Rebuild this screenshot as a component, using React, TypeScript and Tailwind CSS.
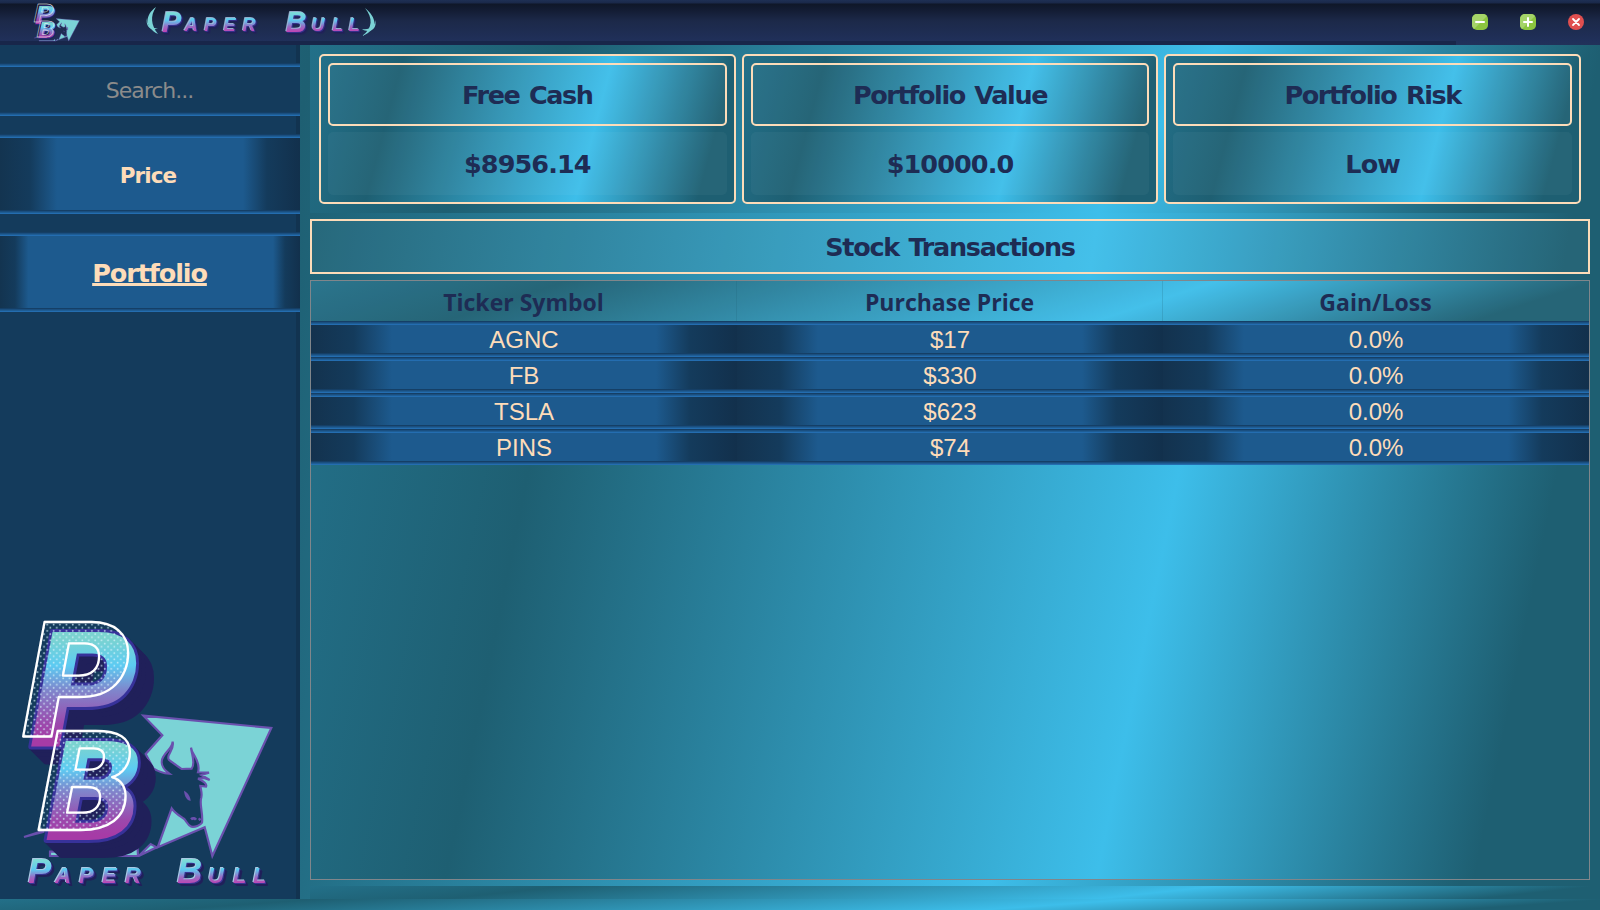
import React from "react";

const STATS = [
  { title: "Free Cash", value: "$8956.14" },
  { title: "Portfolio Value", value: "$10000.0" },
  { title: "Portfolio Risk", value: "Low" },
];

const COLUMNS = ["Ticker Symbol", "Purchase Price", "Gain/Loss"];

const ROWS = [
  ["AGNC", "$17", "0.0%"],
  ["FB", "$330", "0.0%"],
  ["TSLA", "$623", "0.0%"],
  ["PINS", "$74", "0.0%"],
];

const HEADING = "font-['DejaVu_Sans',sans-serif] font-bold leading-none text-[#1e2c54]";

function Ridge() {
  return (
    <div className="h-1 w-full shrink-0 bg-[linear-gradient(180deg,#153f66_0_25%,#1a4f80_25%_50%,#1e5d95_50%_75%,#246db0_75%)]" />
  );
}

type Letter = { ch: string; x: number; big?: boolean };

const WORD: Letter[] = [
  { ch: "P", x: 0, big: true },
  { ch: "A", x: 27 },
  { ch: "P", x: 51 },
  { ch: "E", x: 74 },
  { ch: "R", x: 97 },
  { ch: "B", x: 149, big: true },
  { ch: "U", x: 180 },
  { ch: "L", x: 205 },
  { ch: "L", x: 225 },
];

function Wordmark({ id }: { id: string }) {
  return (
    <g fontFamily="'Liberation Sans', sans-serif" fontWeight="700" fontStyle="italic">
      <defs>
        <linearGradient id={id} gradientUnits="userSpaceOnUse" x1="0" y1="3" x2="0" y2="28">
          <stop offset="0" stopColor="#7fdcd6" />
          <stop offset="0.4" stopColor="#5cc8f0" />
          <stop offset="0.7" stopColor="#9a6cc4" />
          <stop offset="1" stopColor="#c43fb0" />
        </linearGradient>
      </defs>
      <g
        className="[filter:drop-shadow(-0.6px_-0.6px_0_#a9c8e4)_drop-shadow(1.2px_1.2px_0_#3a3494)_drop-shadow(2px_2px_0_#20205a)]"
        fill={`url(#${id})`}
      >
        {WORD.map((l, i) => (
          <text key={i} x={l.x} y={26.5} fontSize={l.big ? 35 : 22}>
            {l.ch}
          </text>
        ))}
      </g>
    </g>
  );
}

const BIG = [
  { ch: "P", x: 60, y: 411, size: 470, sx: 0.96 },
  { ch: "B", x: 107, y: 690, size: 408, sx: 0.99 },
];

function BullMark({ id, small }: { id: string; small?: boolean }) {
  return (
    <g>
      <defs>
        {BIG.map((b) => (
          <linearGradient key={b.ch} id={`${id}-${b.ch}`} x1="0" x2="0" gradientUnits="userSpaceOnUse" y1={-b.size * 0.72} y2="0">
            <stop offset="0.04" stopColor="#7bd3d0" />
            <stop offset="0.28" stopColor="#5ccbf2" />
            <stop offset="0.5" stopColor="#7f86cc" />
            <stop offset="0.8" stopColor="#9c48ac" />
            <stop offset="0.95" stopColor="#a63ba6" />
          </linearGradient>
        ))}
        <pattern id={`${id}-dots`} width="20" height="19" patternUnits="userSpaceOnUse">
          <circle cx="5" cy="4.5" r="2.8" fill="#d4f2fa" fillOpacity="0.8" />
          <circle cx="15" cy="14" r="2.8" fill="#d4f2fa" fillOpacity="0.8" />
        </pattern>
      </defs>
      <g fill="#7bd3d6" stroke="#6a50ae" strokeWidth="6.5" strokeLinejoin="miter">
        <path d="M430 347 L814 384 L637 768 L614 682 L473 742 L515 625 C525 640 540 648 553 657 C560 665 563 676 574 680 C586 682 600 676 606 668 C610 640 597 612 604 592 C607 580 603 570 601 558 L618 560 C622 552 610 542 594 536 L612 534 L629 540 L604 525 L627 518 L594 517 C600 498 592 482 584 468 C577 458 574 452 573 443 C574 460 588 488 575 506 L545 507 C536 500 510 484 506 478 C498 462 524 452 518 425 C516 446 500 452 490 470 C480 486 486 505 508 521 C492 520 475 515 460 505 L437 462 L487 406 Z" />
        <path d="M416 768 L452 732 L470 742 Z" />
        <path d="M150 755 L190 755 L385 755 L412 730 L414 768 L150 768 Z" />
        <path d="M72 711 L130 692 L130 696 Z" />
      </g>
      <path d="M552 572 C563 578 571 588 572 603 C560 600 554 590 552 572 Z" fill="#6a50ae" />
      <path d="M573 658 C580 652 586 656 588 659 M596 660 L602 656" stroke="#6a50ae" strokeWidth="8" fill="none" />
      <g fontFamily="'DejaVu Sans', sans-serif" fontWeight="700" fontStyle="oblique" strokeLinejoin="round">
        {BIG.map((b) => (
          <g key={b.ch} fontSize={b.size}>
            <g
              className={
                small
                  ? "[filter:drop-shadow(12px_12px_0_#20205a)]"
                  : "[filter:drop-shadow(3px_3px_0_#20205a)_drop-shadow(6px_6px_0_#20205a)_drop-shadow(12px_12px_0_#20205a)_drop-shadow(24px_24px_0_#20205a)]"
              }
            >
              <text
                transform={`translate(${b.x + 24} ${b.y + 29}) scale(${b.sx} 1)`}
                fill={`url(#${id}-${b.ch})`}
                stroke="#37329a"
                strokeWidth="18"
                paintOrder="stroke"
              >
                {b.ch}
              </text>
            </g>
            <text
              transform={`translate(${b.x} ${b.y}) scale(${b.sx} 1)`}
              fill={small ? "none" : `url(#${id}-dots)`}
              stroke="#ffffff"
              strokeWidth="7"
            >
              {b.ch}
            </text>
          </g>
        ))}
      </g>
    </g>
  );
}

function TitleBar() {
  return (
    <header className="flex h-[45px] shrink-0 items-start justify-between bg-[linear-gradient(180deg,#1e3054_0,#1a2849_3px,#0f1728_4px,#131c33_10px,#1c2949_21px,#20305a_41px,#21325a_45px)]">
      <div className="flex h-[45px] w-[1456px] items-start border-b-4 border-[#18264a]">
        <svg className="ml-[33px] mt-[3px] h-[39px] w-[48px] overflow-visible" viewBox="50 55 790 730" preserveAspectRatio="none">
          <BullMark id="mini" small />
        </svg>
        <svg className="ml-[63px] mt-[3px] h-[36px] w-[236px] overflow-visible" viewBox="0 0 236 36">
          <g fill="#7bd3d6">
            <path d="M12 4 C1 12 0 24 14 31 C7 22 6 13 12 4 Z" />
            <path d="M3 15 C3 23 7 26 14 25 C8 29 1 24 3 15 Z" />
            <path d="M221 5 C232 14 236 26 218 33 C229 25 229 15 221 5 Z" />
            <path d="M231 17 C231 24 226 27 218 26 C225 31 234 26 231 17 Z" />
          </g>
          <g transform="translate(18 6.5) scale(0.83)">
            <Wordmark id="word-top" />
          </g>
        </svg>
      </div>
      <div className="flex gap-8 pr-4 pt-[14px]">
        <svg className="size-4" viewBox="0 0 16 16">
          <rect width="16" height="16" rx="5" fill="#8cc63f" />
          <path d="M0 5 a5 5 0 0 1 5 -5 h6 a5 5 0 0 1 4 2 L2 15 a5 5 0 0 1 -2 -4 Z" fill="#a5d469" />
          <path d="M4 8 h8" stroke="#fff" strokeWidth="2" strokeLinecap="round" />
        </svg>
        <svg className="size-4" viewBox="0 0 16 16">
          <rect width="16" height="16" rx="5" fill="#8cc63f" />
          <path d="M0 5 a5 5 0 0 1 5 -5 h6 a5 5 0 0 1 4 2 L2 15 a5 5 0 0 1 -2 -4 Z" fill="#a5d469" />
          <path d="M4 8 h8 M8 4 v8" stroke="#fff" strokeWidth="2" strokeLinecap="round" />
        </svg>
        <svg className="size-4" viewBox="0 0 16 16">
          <circle cx="8" cy="8" r="8" fill="#e04f4f" />
          <path d="M5 5 l6 6 M11 5 l-6 6" stroke="#fff" strokeWidth="1.8" strokeLinecap="round" />
        </svg>
      </div>
    </header>
  );
}

function Sidebar() {
  return (
    <aside className="flex w-[300px] shrink-0 flex-col bg-[linear-gradient(90deg,#143b5c_296px,#123350_296px)] pt-[18px]">
      <div className="flex h-[53px] flex-col bg-[#143b5c]">
        <Ridge />
        <input
          placeholder="Search..."
          className="min-h-0 w-full flex-1 bg-transparent pt-0.5 pl-px pr-0.5 text-center font-['DejaVu_Sans',sans-serif] text-[22px] tracking-[-1px] text-[#8b8b8b] outline-none placeholder:text-[#8b8b8b]"
        />
        <Ridge />
      </div>
      <button className="mt-[18px] flex h-20 flex-col text-[#fddcb9]">
        <Ridge />
        <span className="flex w-full flex-1 items-center justify-center bg-[linear-gradient(90deg,#133450_0%,#143b5c_10%,#1d5a8e_19%,#1d5a8e_81%,#143b5c_89%,#12304c_100%)] pr-1 pt-1 font-['DejaVu_Sans',sans-serif] text-[21.5px] font-bold leading-none tracking-[-0.9px]">
          Price
        </span>
        <Ridge />
      </button>
      <button className="mt-[18px] flex h-20 flex-col text-[#fddcb9]">
        <Ridge />
        <span className="flex w-full flex-1 items-center justify-center bg-[linear-gradient(90deg,#133450_0%,#143b5c_5%,#1d5a8e_9.5%,#1d5a8e_91%,#143b5c_95%,#12304c_100%)] pr-px pt-1 font-['DejaVu_Sans',sans-serif] text-[25.5px] font-bold leading-none tracking-[-1.1px] underline decoration-[3px] underline-offset-1 [text-decoration-skip-ink:none]">
          Portfolio
        </span>
        <Ridge />
      </button>
      <svg className="mt-auto h-[289px] w-[296px] overflow-visible" viewBox="0 30 888 867">
        <BullMark id="main" />
        <g transform="translate(84 770) scale(3)">
          <Wordmark id="word-side" />
        </g>
      </svg>
    </aside>
  );
}

export default function App() {
  return (
    <div className="flex h-[910px] w-[1600px] flex-col overflow-hidden bg-[linear-gradient(99.5deg,#237089_0%,#1e5f72_18.3%,#3dbeea_64.8%,#1e5f72_91.8%)]">
      <TitleBar />
      <div className="flex h-[854px] shrink-0">
        <Sidebar />
        <main className="flex flex-1 flex-col px-[10px]">
          <section className="grid h-[168px] grid-cols-3 gap-[6px] bg-[linear-gradient(125.9deg,#237089_0%,#1e5f72_18.3%,#3dbeea_64.8%,#1e5f72_91.8%)] p-[9px]">
            {STATS.map((s) => (
              <div
                key={s.title}
                className="flex flex-col gap-[6px] rounded-[5px] border-2 border-[#fddcb9] bg-[linear-gradient(104.9deg,#237089_0%,#1e5f72_18.3%,#3dbeea_64.8%,#1e5f72_91.8%)] p-[7px]"
              >
                <div className={`flex h-[63px] items-center justify-center rounded-[5px] border-2 border-[#fddcb9] bg-white/4 pt-[2px] text-[25.5px] tracking-[-1.4px] [word-spacing:2px] ${HEADING}`}>
                  {s.title}
                </div>
                <div className={`flex h-[63px] items-center justify-center rounded-[5px] bg-white/4 pt-[2px] text-[25.5px] tracking-[-0.9px] ${HEADING}`}>
                  {s.value}
                </div>
              </div>
            ))}
          </section>
          <h2 className={`mt-[6px] flex h-[55px] items-center justify-center border-2 border-[#fddcb9] bg-white/4 pt-[2px] text-[25.5px] tracking-[-1.3px] [word-spacing:2px] ${HEADING}`}>
            Stock Transactions
          </h2>
          <div className="mt-[6px] flex h-[600px] flex-col border border-[#80868b] bg-[linear-gradient(101.5deg,#237089_0%,#1e5f72_18.3%,#3dbeea_64.8%,#1e5f72_91.8%)]">
            <div className="h-10 shrink-0 bg-[linear-gradient(161.8deg,#237089_0%,#1e5f72_18.3%,#3dbeea_64.8%,#1e5f72_91.8%)]">
              <div className="grid h-10 grid-cols-3 bg-white/4">
                {COLUMNS.map((c) => (
                  <div
                    key={c}
                    className="flex items-center justify-center border-r border-[#1e5f72]/20 pt-[2px] font-['Open_Sans','Noto_Sans',sans-serif] text-[23px] font-bold leading-none text-[#1e2c54]"
                  >
                    {c}
                  </div>
                ))}
              </div>
            </div>
            {ROWS.map((r) => (
              <div key={r[0]} className="flex h-9 shrink-0 flex-col">
                <Ridge />
                <div className="grid h-7 grid-cols-3">
                  {r.map((v, i) => (
                    <div
                      key={i}
                      className="flex items-center justify-center bg-[linear-gradient(90deg,#13324e_0%,#143b5c_10%,#1d5a8e_19%,#1d5a8e_81%,#143b5c_89%,#12304c_100%)] pt-[2px] font-['Liberation_Sans',sans-serif] text-[24px] leading-none text-[#fddcb9]"
                    >
                      {v}
                    </div>
                  ))}
                </div>
                <Ridge />
              </div>
            ))}
          </div>
          <div className="mt-[6px] h-[13px] bg-[linear-gradient(173.9deg,#237089_0%,#1e5f72_18.3%,#3dbeea_64.8%,#1e5f72_91.8%)]" />
        </main>
      </div>
      <footer className="h-[11px] shrink-0 bg-[linear-gradient(175.9deg,#237089_0%,#1e5f72_18.3%,#3dbeea_64.8%,#1e5f72_91.8%)]" />
    </div>
  );
}
